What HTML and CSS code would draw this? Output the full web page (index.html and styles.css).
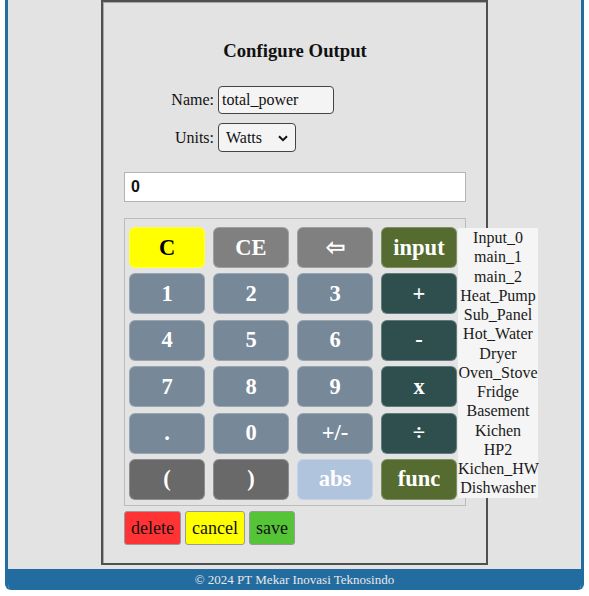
FILE: index.html
```html
<!DOCTYPE html>
<html>
<head>
<meta charset="utf-8">
<link rel="stylesheet" href="styles.css">
</head>
<body>
<div class="wrapper">
  <div class="panel">
    <h3 class="title">Configure Output</h3>
    <div class="form">
      <label class="label">Name:</label>
      <input class="name-input" type="text" value="total_power">
      <label class="label">Units:</label>
      <div class="select-box">
        <span class="select-text">Watts</span>
        <svg class="chevron" width="10" height="7" viewBox="0 0 10 7"><path d="M1 1.2 L5 5.2 L9 1.2" fill="none" stroke="#111" stroke-width="2"/></svg>
      </div>
    </div>
    <div class="display">0</div>
    <div class="calc">
      <div class="keys">
        <button class="key k-clear">C</button>
        <button class="key k-gray">CE</button>
        <button class="key k-gray">⇦</button>
        <button class="key k-olive">input</button>
        <button class="key k-num">1</button>
        <button class="key k-num">2</button>
        <button class="key k-num">3</button>
        <button class="key k-op">+</button>
        <button class="key k-num">4</button>
        <button class="key k-num">5</button>
        <button class="key k-num">6</button>
        <button class="key k-op">-</button>
        <button class="key k-num">7</button>
        <button class="key k-num">8</button>
        <button class="key k-num">9</button>
        <button class="key k-op">x</button>
        <button class="key k-num">.</button>
        <button class="key k-num">0</button>
        <button class="key k-num">+/-</button>
        <button class="key k-op">÷</button>
        <button class="key k-paren">(</button>
        <button class="key k-paren">)</button>
        <button class="key k-abs">abs</button>
        <button class="key k-olive">func</button>
      </div>
      <ul class="inputs-list">
        <li>Input_0</li>
        <li>main_1</li>
        <li>main_2</li>
        <li>Heat_Pump</li>
        <li>Sub_Panel</li>
        <li>Hot_Water</li>
        <li>Dryer</li>
        <li>Oven_Stove</li>
        <li>Fridge</li>
        <li>Basement</li>
        <li>Kichen</li>
        <li>HP2</li>
        <li>Kichen_HW</li>
        <li>Dishwasher</li>
      </ul>
    </div>
    <div class="actions">
      <button class="act act-delete">delete</button>
      <button class="act act-cancel">cancel</button>
      <button class="act act-save">save</button>
    </div>
  </div>
  <div class="footer">© 2024 PT Mekar Inovasi Teknosindo</div>
</div>
</body>
</html>
```

FILE: styles.css
```css
html, body {
  margin: 0;
  padding: 0;
  background: #ffffff;
  font-family: "Liberation Serif", "Times New Roman", serif;
}

.wrapper {
  margin-left: 5px;
  width: 579px;
  box-sizing: border-box;
  background: #e3e3e3;
  border-left: 3px solid #236ca0;
  border-right: 3px solid #236ca0;
  border-radius: 0 0 6px 6px;
  overflow: hidden;
}

.panel {
  width: 387px;
  box-sizing: border-box;
  margin: 0 auto 4px auto;
  border: 2px solid #505050;
  box-shadow: inset 1px 1px 0 #a8a8a8;
  padding: 38px 20px 18px 21px;
}

.title {
  margin: 0;
  font-size: 18.72px;
  line-height: 22px;
  font-weight: bold;
  text-align: center;
  color: #111;
}

.form {
  margin-top: 24px;
  display: grid;
  grid-template-columns: 90px auto;
  column-gap: 4px;
  row-gap: 9px;
  justify-content: start;
  align-items: center;
}

.label {
  text-align: right;
  font-size: 16px;
  color: #111;
}

.name-input {
  width: 116px;
  height: 28px;
  box-sizing: border-box;
  border: 1px solid #444;
  border-radius: 4px;
  background: #f4f4f4;
  padding: 0 3px;
  font-family: "Liberation Serif", serif;
  font-size: 16px;
  color: #111;
  margin: 0;
}

.select-box {
  position: relative;
  width: 78px;
  height: 29px;
  box-sizing: border-box;
  border: 1px solid #444;
  border-radius: 4px;
  background: #f4f4f4;
  display: flex;
  align-items: center;
  padding-left: 7px;
  font-size: 16px;
  color: #111;
}

.chevron {
  position: absolute;
  right: 7px;
  top: 11px;
}

.display {
  margin-top: 20px;
  width: 342px;
  height: 30px;
  box-sizing: border-box;
  border: 1px solid #b4b4b4;
  background: #ffffff;
  padding-left: 6px;
  display: flex;
  align-items: center;
  font-family: "Liberation Sans", Arial, sans-serif;
  font-weight: bold;
  font-size: 16px;
  color: #111;
}

.calc {
  position: relative;
  margin-top: 16px;
  width: 342px;
  height: 288px;
  box-sizing: border-box;
  border: 1px solid #bcbcbc;
  padding: 8px 4px 0 4px;
}

.keys {
  display: grid;
  grid-template-columns: repeat(4, 76px);
  grid-auto-rows: 41px;
  column-gap: 8px;
  row-gap: 5.4px;
}

.key {
  margin: 0;
  padding: 0;
  border: 1px solid rgba(255, 255, 255, 0.25);
  border-radius: 6px;
  font-family: "Liberation Serif", serif;
  font-weight: bold;
  font-size: 22.5px;
  color: #ffffff;
}

.k-clear { background: #ffff00; color: #000; }
.k-gray { background: #808080; }
.k-olive { background: #556b2f; }
.k-num { background: #778899; }
.k-op { background: #2f4f4f; }
.k-paren { background: #696969; }
.k-abs { background: #b0c4de; }

.inputs-list {
  position: absolute;
  left: 333px;
  top: 9px;
  width: 80px;
  margin: 0;
  padding: 0;
  list-style: none;
  background: #f5f5f5;
  text-align: center;
  font-size: 16px;
  line-height: 19.25px;
  color: #1a1a1a;
}

.actions {
  margin-top: 5px;
  display: flex;
  gap: 4px;
}

.act {
  margin: 0;
  height: 34px;
  padding: 0 6px;
  border: 1px solid #9a9a9a;
  border-radius: 3px;
  font-family: "Liberation Serif", serif;
  font-size: 18px;
  color: #111;
}

.act-delete { background: #ff3333; }
.act-cancel { background: #ffff00; }
.act-save { background: #55c436; }

.footer {
  height: 21px;
  line-height: 21px;
  background: #236ca0;
  color: #e8e8e8;
  text-align: center;
  font-size: 13px;
}
```
